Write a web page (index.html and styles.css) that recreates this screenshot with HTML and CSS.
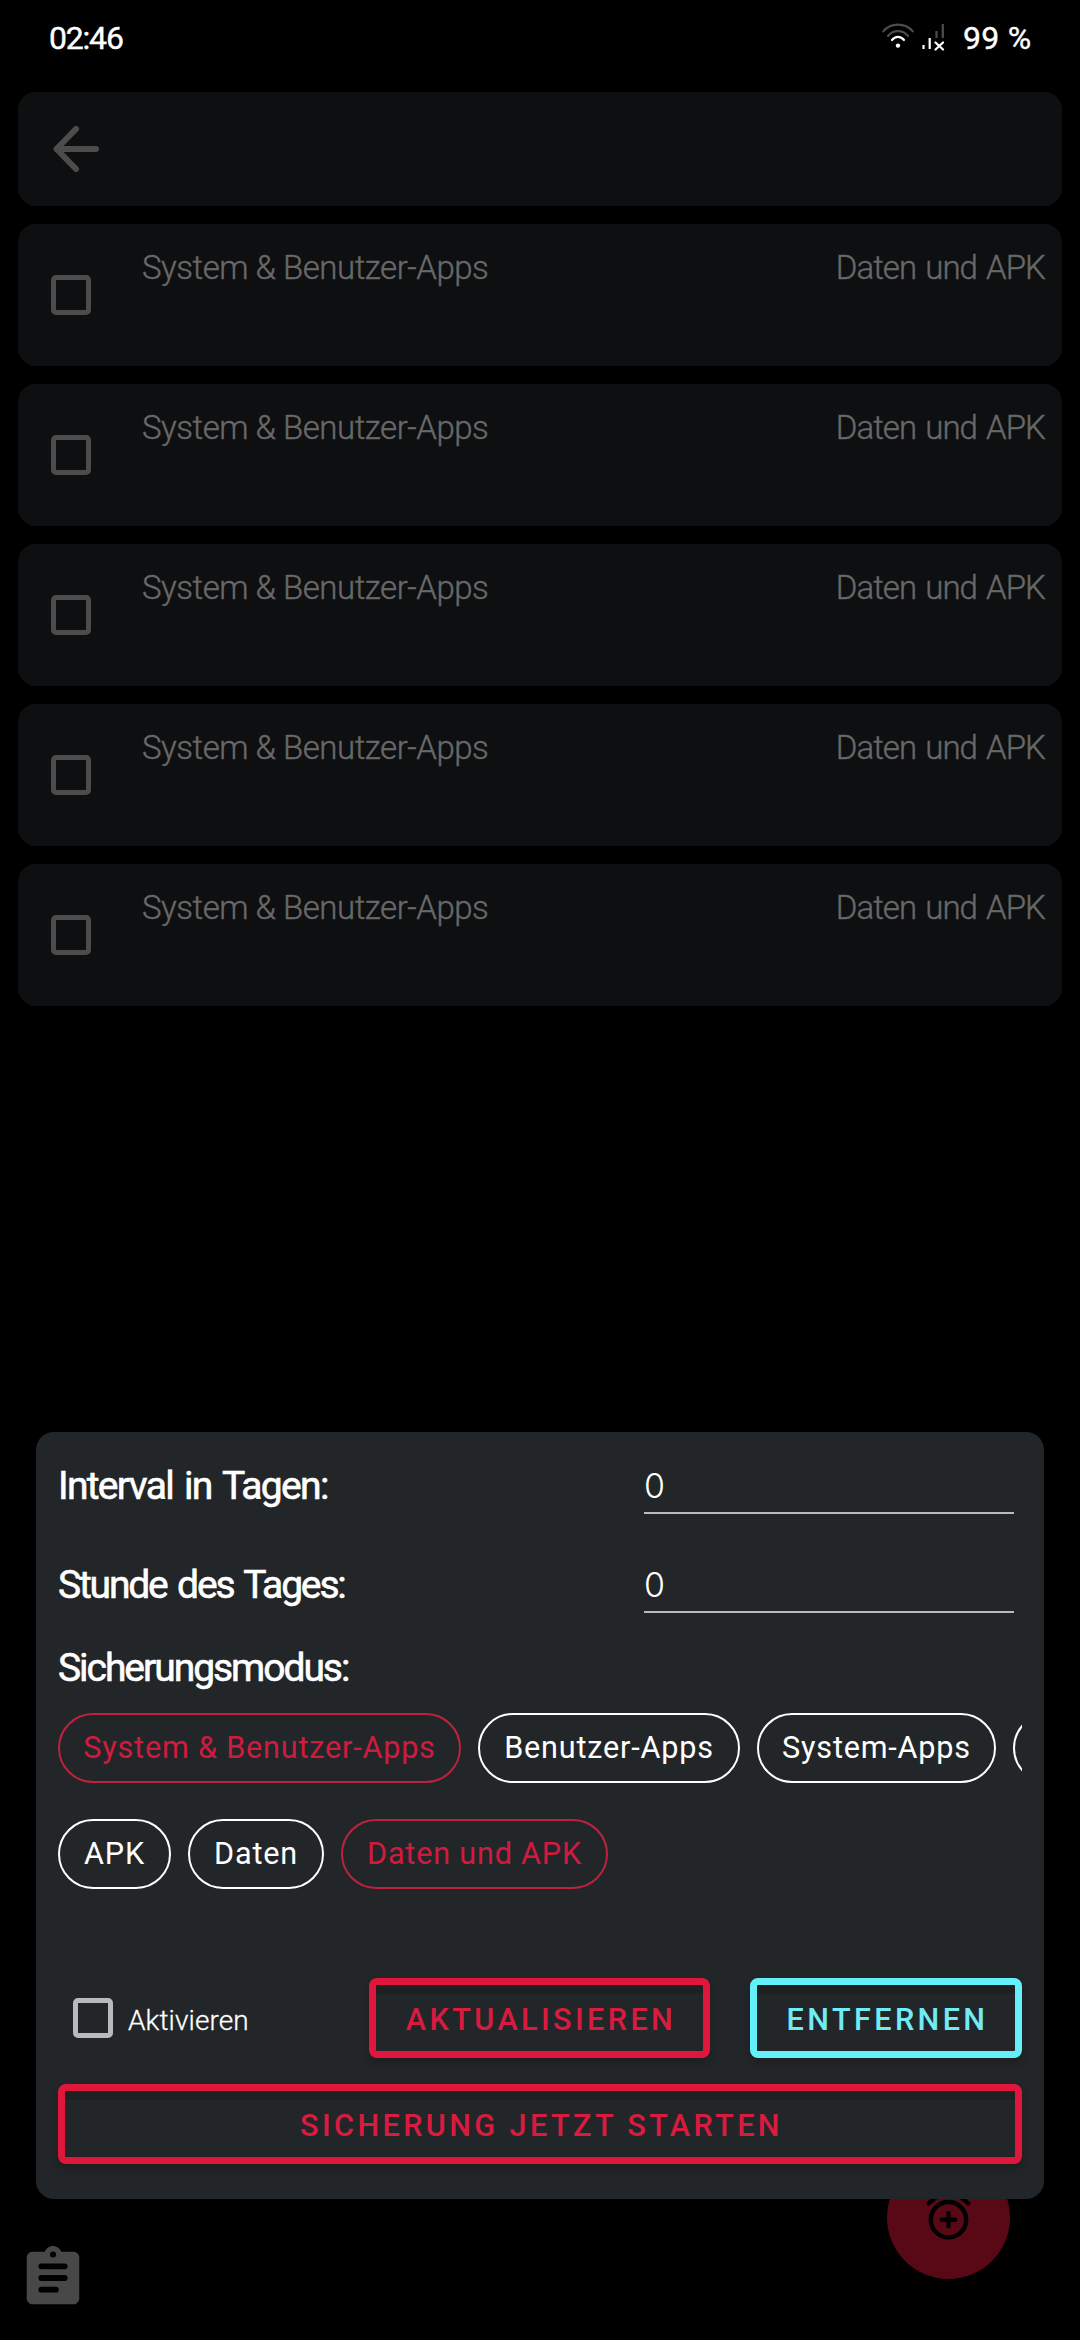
FILE: index.html
```html
<!DOCTYPE html>
<html lang="de">
<head>
<meta charset="utf-8">
<title>Zeitplan</title>
<link rel="stylesheet" href="styles.css">
</head>
<body>
<div class="screen">
  <header class="status">
    <span class="clock">02:46</span>
    <div class="indicators">
      <svg class="wifi" viewBox="0 0 32 26" fill="none" stroke-linecap="round">
        <path class="dim" d="M1.2 8.4Q7 1.6 16 1.6T30.800 8.400" />
        <path class="dim" d="M6 13Q10 8.200 16 8.200T26 13" />
        <path class="lit" d="M10 17Q12.500 13.900 16 13.900T22 17" />
        <circle class="dot" cx="16" cy="22.600" r="2.200" />
      </svg>
      <svg class="signal" viewBox="0 0 24 28" fill="none">
        <path class="lit" d="M1.500 22v4M7.700 15v11" />
        <path class="dim" d="M14.500 8v7M20.800 1v14" />
        <path class="lit" d="M13.500 19.500l7.500 7M21 19.500l-7.500 7" stroke-linecap="round" />
      </svg>
      <span class="battery">99 %</span>
    </div>
  </header>

  <main class="list">
    <div class="toolbar">
      <svg class="back" viewBox="0 0 46 46"><path d="M43 23H3.500M23 3L3.500 23L23 43" /></svg>
    </div>
    <div class="card"><span class="box"></span><span class="mode">System &amp; Benutzer-Apps</span><span class="sub">Daten und APK</span></div>
    <div class="card"><span class="box"></span><span class="mode">System &amp; Benutzer-Apps</span><span class="sub">Daten und APK</span></div>
    <div class="card"><span class="box"></span><span class="mode">System &amp; Benutzer-Apps</span><span class="sub">Daten und APK</span></div>
    <div class="card"><span class="box"></span><span class="mode">System &amp; Benutzer-Apps</span><span class="sub">Daten und APK</span></div>
    <div class="card"><span class="box"></span><span class="mode">System &amp; Benutzer-Apps</span><span class="sub">Daten und APK</span></div>
  </main>

  <footer class="bottom">
    <svg class="log" viewBox="0 0 24 24"><path fill-rule="evenodd" d="M19 3h-4.180C14.400 1.840 13.300 1 12 1s-2.400.840-2.820 2H5c-1.100 0-2 .9-2 2v14c0 1.100.9 2 2 2h14c1.100 0 2-.9 2-2V5c0-1.100-.9-2-2-2zM12 2.900a1.050 1.050 0 1 1 0 2.100a1.050 1.050 0 1 1 0-2.100zM13 17H8a1 1 0 0 1 0-2h5a1 1 0 0 1 0 2zM16 13H8a1 1 0 0 1 0-2h8a1 1 0 0 1 0 2zM16 9H8a1 1 0 0 1 0-2h8a1 1 0 0 1 0 2z" /></svg>
  </footer>

  <div class="fab">
    <svg class="alarm" viewBox="0 0 24 24"><circle cx="12" cy="13" r="8" /><path d="M12 10v6M9 13h6M3 5.600L6.600 2.600M21 5.600L17.400 2.600" /></svg>
  </div>

  <section class="dialog">
    <div class="field"><label class="heading interval">Interval in Tagen:</label><span class="input">0</span></div>
    <div class="field"><label class="heading hour">Stunde des Tages:</label><span class="input">0</span></div>
    <h2 class="heading backup">Sicherungsmodus:</h2>
    <div class="chips first">
      <span class="chip active wide">System &amp; Benutzer-Apps</span>
      <span class="chip user">Benutzer-Apps</span>
      <span class="chip system">System-Apps</span>
      <span class="chip more"></span>
    </div>
    <div class="chips second">
      <span class="chip apk">APK</span>
      <span class="chip data">Daten</span>
      <span class="chip active both">Daten und APK</span>
    </div>
    <div class="actions">
      <span class="box enable"></span>
      <span class="enable-label">Aktivieren</span>
      <span class="button update">AKTUALISIEREN</span>
      <span class="button remove">ENTFERNEN</span>
    </div>
    <span class="button start">SICHERUNG JETZT STARTEN</span>
  </section>
</div>
</body>
</html>
```
FILE: styles.css
```css
* { box-sizing: border-box; }

body {
  margin: 0;
  background: #000;
  font-family: Roboto, "Liberation Sans", sans-serif;
  color: #fff;
}

.screen {
  position: relative;
  display: flex;
  flex-direction: column;
  width: 1080px;
  height: 2340px;
  overflow: hidden;
  white-space: nowrap;
}

/* Status bar */
.status {
  display: flex;
  justify-content: space-between;
  height: 92px;
  padding: 0 48px 0 49px;
  font-size: 32px;
  line-height: 77px;
  -webkit-text-stroke: 0.4px #fff;
}
.clock { letter-spacing: -1.2px; }
.indicators { display: flex; }
.battery { letter-spacing: 0.3px; width: 69px; }
.wifi { width: 32px; height: 26px; margin: 23px 8px 0 0; }
.signal { width: 24px; height: 28px; margin: 23px 17px 0 0; }
.lit { stroke: #fff; stroke-width: 2.2; }
.dim { stroke: #4c4c4c; stroke-width: 2.2; }
.dot { fill: #fff; }

/* Schedule list */
.list {
  display: flex;
  flex-direction: column;
  gap: 18px;
  padding: 0 18px;
}
.toolbar, .card {
  display: flex;
  background: #0e0f10;
  border-radius: 18px;
}
.toolbar { height: 114px; align-items: center; padding-left: 35px; }
.back { width: 46px; height: 46px; }
.back path {
  fill: none;
  stroke: #4c4c4c;
  stroke-width: 6;
  stroke-linecap: round;
  stroke-linejoin: round;
}
.card {
  height: 142px;
  padding: 0 17px 0 33px;
  font-size: 33px;
  font-weight: 300;
  line-height: 87px;
  color: #686868;
  -webkit-text-stroke: 0.4px #686868;
}
.box {
  flex: none;
  width: 40px;
  height: 40px;
  border: 5px solid #4c4c4c;
  border-radius: 5px;
}
.card .box { margin: 51px 51px 0 0; }
.mode { letter-spacing: -0.48px; }
.sub { margin-left: auto; letter-spacing: -0.95px; word-spacing: 2px; }

/* Bottom bar */
.bottom { margin-top: auto; height: 97px; padding-left: 18px; }
.log { width: 70px; height: 70px; fill: #484848; }
.fab {
  position: absolute;
  left: 887px;
  top: 2156px;
  display: flex;
  align-items: center;
  justify-content: center;
  width: 123px;
  height: 123px;
  border-radius: 50%;
  background: #590916;
}
.alarm {
  width: 53px;
  height: 53px;
  fill: none;
  stroke: #000;
  stroke-width: 2;
  stroke-linecap: round;
}

/* Schedule dialog */
.dialog {
  position: absolute;
  left: 36px;
  top: 1432px;
  display: flex;
  flex-direction: column;
  width: 1008px;
  height: 767px;
  padding: 3px 22px 0;
  border-radius: 18px;
  background: #232629;
}
.field {
  display: flex;
  align-items: flex-start;
  justify-content: space-between;
  height: 99px;
  padding-right: 8px;
}
.heading {
  margin: 0;
  font-size: 39px;
  font-weight: 400;
  line-height: 102px;
  word-spacing: 3px;
  -webkit-text-stroke: 0.6px #fff;
}
.interval { letter-spacing: -1.68px; }
.hour { letter-spacing: -2.17px; }
.backup { height: 67px; line-height: 70px; letter-spacing: -2.04px; }
.input {
  width: 370px;
  margin-top: 26px;
  padding-bottom: 1px;
  border-bottom: 2px solid #b9babb;
  font: 300 34px/50px Inter, sans-serif;
}
.chips { display: flex; gap: 17px; overflow: hidden; }
.first { margin-top: 13px; }
.second { margin-top: 36px; }
.chip {
  flex: none;
  height: 70px;
  border: 2px solid #fff;
  border-radius: 35px;
  font-size: 30.6px;
  line-height: 66px;
  text-align: center;
  letter-spacing: 0.8px;
}
.active { border-color: #be223f; color: #d01b3f; }
.wide { width: 403px; }
.user { width: 262px; }
.system { width: 239px; }
.more { width: 200px; }
.apk { width: 113px; }
.data { width: 136px; }
.both { width: 267px; }
.actions {
  display: flex;
  height: 80px;
  margin-top: 89px;
  padding-left: 15px;
}
.enable { margin-top: 20px; border-color: #b9babb; }
.enable-label {
  width: 241px;
  margin-left: 15px;
  font-size: 28px;
  font-weight: 300;
  line-height: 85px;
  letter-spacing: 0.1px;
  -webkit-text-stroke: 0.3px #fff;
}
.button {
  flex: none;
  height: 80px;
  border: 7px solid #e0163c;
  border-radius: 8px;
  font-size: 30.6px;
  font-weight: 500;
  line-height: 70px;
  text-align: center;
  letter-spacing: 3.4px;
  text-indent: 3px;
  color: #d81b3f;
  box-shadow: 0 5px 6px rgba(24, 24, 26, 0.5), inset 0 9px 0 #1f2022;
}
.update { width: 341px; margin-right: 40px; }
.remove { width: 272px; border-color: #64f0fa; color: #70ecf5; }
.start { margin-top: 26px; }
```
